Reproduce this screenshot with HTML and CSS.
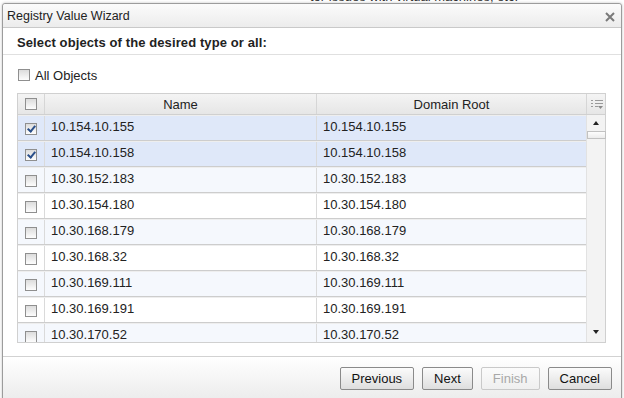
FILE: index.html
```html
<!DOCTYPE html>
<html lang="en">
<head>
  <meta charset="UTF-8">
  <title>Registry Value Wizard</title>
  <link rel="stylesheet" href="styles.css">
</head>
<body>

<p class="behind">tor issues with virtual machines, etc.</p>

<div class="dialog">
  <div class="titlebar">
    <span class="title">Registry Value Wizard</span>
    <svg class="close" width="10" height="10" viewBox="0 0 10 10">
      <path d="M1 1 L9 9 M9 1 L1 9" stroke="#7a7a7a" stroke-width="2"/>
    </svg>
  </div>

  <div class="content">
    <h2>Select objects of the desired type or all:</h2>

    <label class="all">
      <span class="cb"></span> All Objects
    </label>

    <div class="grid">
      <div class="grid-head">
        <div class="c-check"><span class="cb"></span></div>
        <div class="c-name">Name</div>
        <div class="c-root">Domain Root</div>
        <div class="c-menu">
          <svg width="12" height="11" viewBox="0 0 12 11">
            <path d="M0 1.5h2M4 1.5h8M0 4.5h2M4 4.5h8M0 7.5h2M4 7.5h3" stroke="#9a9a9a" stroke-width="1"/>
            <path d="M7 7 L12 7 L9.5 10 Z" fill="#8a8a8a"/>
          </svg>
        </div>
      </div>
      <div class="grid-body">
        <div class="rows" id="rows"></div>
        <div class="scrollbar">
          <span class="arrow up"></span>
          <span class="thumb"></span>
          <span class="arrow down"></span>
        </div>
      </div>
    </div>
  </div>

  <div class="footer">
    <button>Previous</button>
    <button>Next</button>
    <button disabled>Finish</button>
    <button>Cancel</button>
  </div>
</div>

<script>
  const hosts = [
    { ip: '10.154.10.155', checked: true },
    { ip: '10.154.10.158', checked: true },
    { ip: '10.30.152.183' },
    { ip: '10.30.154.180' },
    { ip: '10.30.168.179' },
    { ip: '10.30.168.32' },
    { ip: '10.30.169.111' },
    { ip: '10.30.169.191' },
    { ip: '10.30.170.52' }
  ];

  const rows = document.getElementById('rows');
  hosts.forEach((h, i) => {
    const div = document.createElement('div');
    div.className = 'row' + (h.checked ? ' selected' : (i % 2 === 0 ? ' alt' : ''));
    div.innerHTML = `
      <div class="c-check"><span class="cb${h.checked ? ' on' : ''}"></span></div>
      <div class="c-name">${h.ip}</div>
      <div class="c-root">${h.ip}</div>`;
    rows.appendChild(div);
  });
</script>

</body>
</html>
```

FILE: styles.css
```css
body { margin: 0; background: #fff; font-family: "Liberation Sans", Arial, sans-serif; font-size: 13px; color: #222; overflow: hidden; }
.behind { position: absolute; top: -11px; left: 310px; margin: 0; color: #333; font-size: 13px; }

.dialog { position: absolute; top: 3px; left: 2px; width: 618px; height: 420px; background: #fff; border: 1px solid #9c9c9c; border-radius: 3px 3px 0 0; box-shadow: 0 0 3px rgba(0,0,0,0.25); display: flex; flex-direction: column; }

.titlebar { height: 23px; display: flex; align-items: center; justify-content: space-between; padding: 0 6px 0 4px; background: linear-gradient(#fbfbfb, #ececec); border-bottom: 1px solid #c9c9c9; border-radius: 3px 3px 0 0; }
.title { font-size: 12.5px; color: #222; }
.close { margin-top: 2px; }

.content { padding: 0 0 0 14px; height: 328px; }
.content h2 { margin: 0 0 0 -14px; padding: 7px 0 0 14px; height: 19px; font-size: 13px; font-weight: bold; color: #222; border-bottom: 1px solid #e0e0e0; letter-spacing: 0.1px; }

.all { display: flex; align-items: center; gap: 5px; margin: 13px 0 0 1px; height: 14px; color: #222; }

.cb { display: inline-block; width: 10px; height: 10px; border: 1px solid #8f8f8f; background: linear-gradient(#dcdcdc, #fdfdfd); position: relative; }
.cb.on::after { content: ""; position: absolute; left: 3px; top: 0px; width: 3px; height: 6px; border: solid #2a4f8a; border-width: 0 2px 2px 0; transform: rotate(40deg); }

.grid { margin-top: 11px; width: 587px; border: 1px solid #d0d0d0; }
.grid-head { display: flex; height: 20px; background: linear-gradient(#f4f4f4, #e6e6e6); border-bottom: 1px solid #d0d0d0; color: #222; }
.grid-head > div { display: flex; align-items: center; justify-content: center; border-right: 1px solid #d6d6d6; }
.grid-head .c-menu { border-right: none; }

.c-check { width: 26px; flex: none; display: flex; align-items: center; justify-content: center; border-right: 1px solid #dadada; }
.c-name { width: 271px; flex: none; }
.c-root { width: 269px; flex: none; }
.c-menu { width: 20px; flex: none; }

.grid-body { display: flex; height: 227px; }
.rows { width: 568px; overflow: hidden; }
.row { display: flex; height: 24px; border-top: 1px solid #eeeeee; border-bottom: 1px solid #cdcdcd; background: #fff; }
.row.alt { background: #f5f8fd; }
.row.selected { background: #dfe8f9; }
.row .c-name, .row .c-root { display: flex; align-items: center; padding: 0 0 3px 6px; box-sizing: border-box; }
.row .c-name { border-right: 1px solid #dadada; width: 272px; }
.row .c-root { width: 270px; }
.row .cb { margin-top: 1px; margin-left: -1px; }

.scrollbar { width: 18px; flex: none; background: #f3f3f3; border-left: 1px solid #e2e2e2; display: flex; flex-direction: column; align-items: center; position: relative; }
.arrow { width: 0; height: 0; border-left: 3px solid transparent; border-right: 3px solid transparent; }
.arrow.up { margin-top: 6px; border-bottom: 4px solid #222; }
.thumb { margin-top: 6px; width: 17px; height: 6px; border: 1px solid #c2c2c2; background: linear-gradient(#fdfdfd, #ececec); }
.arrow.down { position: absolute; bottom: 8px; border-top: 4px solid #222; }

.footer { border-top: 1px solid #d2d2d2; background: linear-gradient(#ffffff, #ededed 40px); flex: 1; display: flex; justify-content: flex-end; gap: 8px; padding: 10px 9px 0 0; align-items: flex-start; }
.footer button { height: 23px; padding: 0 11px; font-family: "Liberation Sans", Arial, sans-serif; font-size: 13px; color: #111; border: 1px solid #8a8a8a; border-radius: 2px; background: linear-gradient(#fbfbfb, #dedede); }
.footer button:disabled { color: #a8a8a8; border-color: #c9c9c9; background: linear-gradient(#fbfbfb, #efefef); }
```
